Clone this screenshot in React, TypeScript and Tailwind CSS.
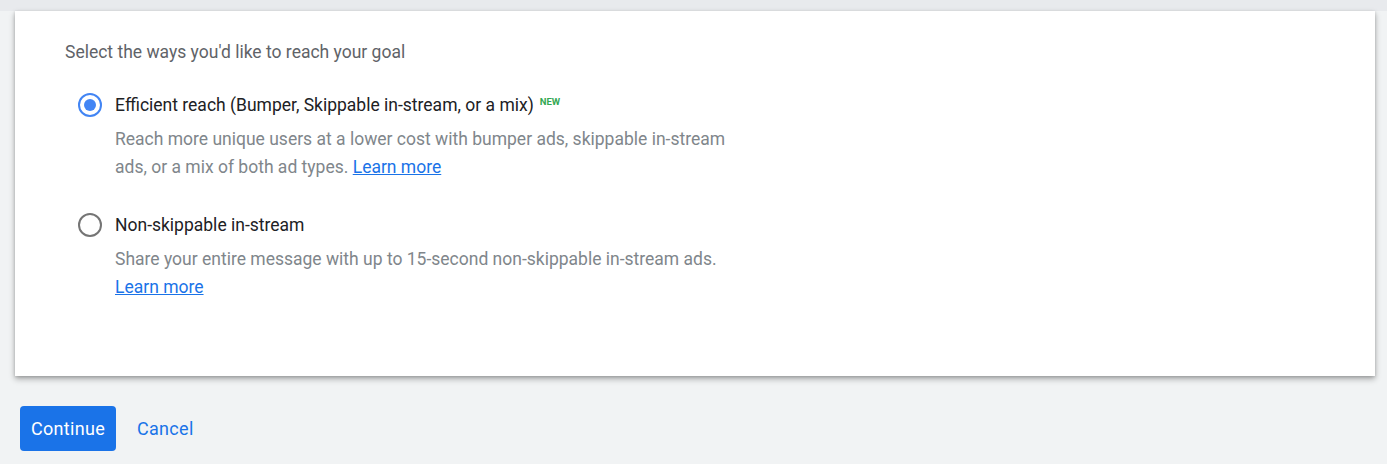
import { useState } from "react";

interface Option {
    id: string;
    title: string;
    badge?: string;
    description: string;
    breakBeforeLink?: boolean;
}

const options: Option[] = [
    {
        id: "efficient",
        title: "Efficient reach (Bumper, Skippable in-stream, or a mix)",
        badge: "NEW",
        description: "Reach more unique users at a lower cost with bumper ads, skippable in-stream ads, or a mix of both ad types.",
    },
    {
        id: "nonskip",
        title: "Non-skippable in-stream",
        description: "Share your entire message with up to 15-second non-skippable in-stream ads.",
        breakBeforeLink: true,
    },
];

const Radio = ({ checked }: { checked: boolean }) => (
    <span
        className={
            checked
                ? "mt-[1px] flex h-[24px] w-[24px] shrink-0 items-center justify-center rounded-full border-[2px] border-[#4285f4]"
                : "mt-[1px] flex h-[24px] w-[24px] shrink-0 items-center justify-center rounded-full border-[2px] border-[#757575]"
        }
    >
        {checked && <span className="h-[12px] w-[12px] rounded-full bg-[#4285f4]" />}
    </span>
);

export default function App() {
    const [selected, setSelected] = useState("efficient");

    return (
        <div className="min-h-[464px] w-full bg-[#f1f3f4] font-['Roboto',sans-serif]">
            <div className="h-[11px] bg-[#e8eaed]" />
            <div className="px-[15px] pr-[12px]">
                <div className="h-[365px] bg-white pl-[50px] pt-[30px] shadow-[0_3px_6px_rgba(0,0,0,0.3),0_1px_3px_rgba(0,0,0,0.15)]">
                    <p className="text-[17.5px] leading-[22px] text-[#5f6368]">
                        Select the ways you'd like to reach your goal
                    </p>

                    <div className="mt-[29px] flex flex-col gap-[31px]">
                        {options.map((o) => (
                            <label
                                key={o.id}
                                className="flex cursor-pointer gap-[13px] pl-[13px]"
                                onClick={() => setSelected(o.id)}
                            >
                                <Radio checked={selected === o.id} />
                                <div className="w-[620px]">
                                    <div className="text-[17.5px] leading-[26px] text-[#202124]">
                                        {o.title}
                                        {o.badge && (
                                            <sup className="relative -top-[6px] ml-[6px] text-[9.5px] font-bold text-[#34a853]">
                                                {o.badge}
                                            </sup>
                                        )}
                                    </div>
                                    <p className="mt-[7px] text-[17.5px] leading-[28px] text-[#80868b]">
                                        {o.description}{" "}
                                        {o.breakBeforeLink && <br />}
                                        <a href="#" className="text-[#1a73e8] underline">
                                            Learn more
                                        </a>
                                    </p>
                                </div>
                            </label>
                        ))}
                    </div>
                </div>
            </div>

            <div className="flex items-center gap-[21px] px-[20px] pt-[30px]">
                <button className="h-[45px] w-[96px] rounded-[4px] bg-[#1a73e8] text-[18px] tracking-[0.3px] text-white">
                    Continue
                </button>
                <button className="text-[18px] tracking-[0.3px] text-[#1a73e8]">Cancel</button>
            </div>
        </div>
    );
}
